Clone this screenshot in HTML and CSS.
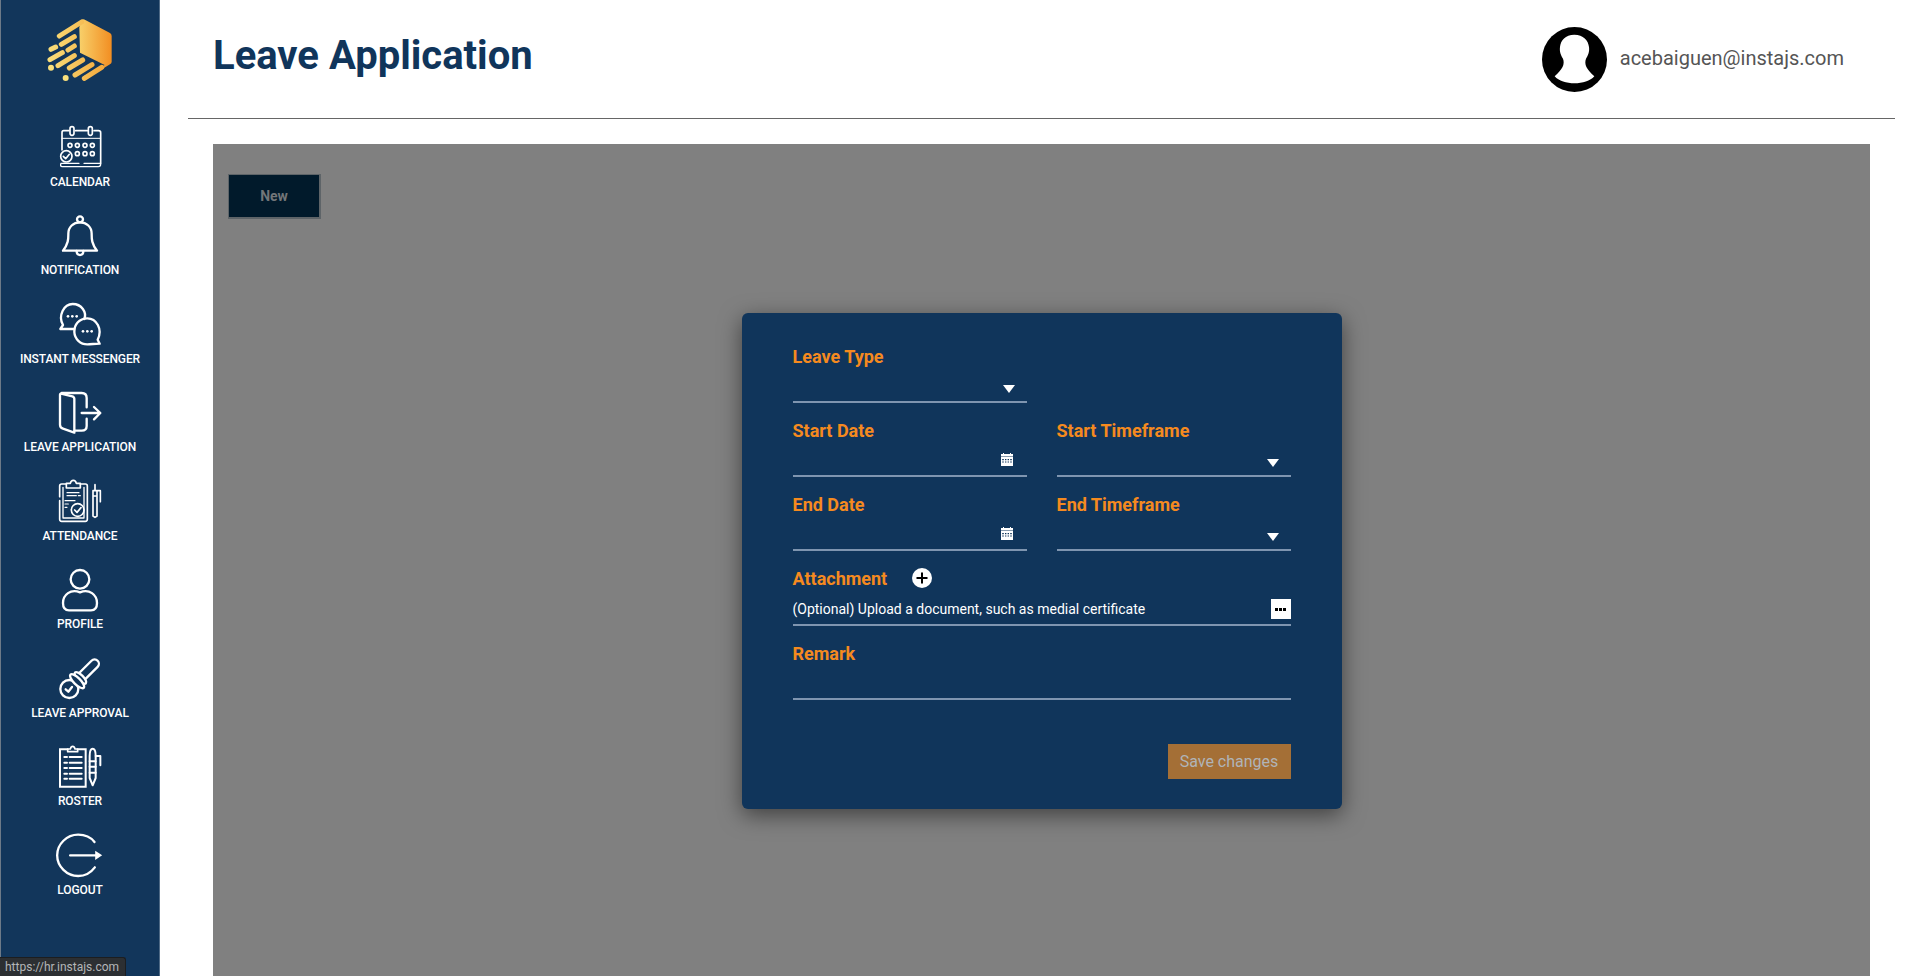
FILE: index.html
```html
<!DOCTYPE html>
<html lang="en">
<head>
    <meta charset="UTF-8">
    <meta name="viewport" content="width=device-width, initial-scale=1.0">
    <title>Leave Application</title>
    <link rel="stylesheet" href="styles.css">
</head>
<body>
    <!-- sidebar -->
    <aside class="sidebar">
        <svg class="logo" viewBox="0 0 300 240">
            <defs>
                <linearGradient id="logo-fill" x1="0" y1="0" x2="1" y2="0">
                    <stop offset="0" stop-color="#f8d06a"/>
                    <stop offset="1" stop-color="#f28e22"/>
                </linearGradient>
                <linearGradient id="logo-stripe" gradientUnits="userSpaceOnUse" x1="50" y1="0" x2="245" y2="0">
                    <stop offset="0" stop-color="#f9e07c"/>
                    <stop offset="1" stop-color="#f3a235"/>
                </linearGradient>
            </defs>
            <path d="M148 52 L155 30 Q160 26 166 30 L240 69 Q245 72 245 78 V155 Q245 160 240 163 L168 207 L158 200 L224 165 L150 128 Z" fill="url(#logo-fill)"/>
            <g fill="none" stroke="url(#logo-stripe)" stroke-width="15" stroke-linecap="round">
                <path d="M88 78 L155 36"/>
                <path d="M94 103 L133 80"/>
                <path d="M63 118 L77 111"/>
                <path d="M114 120 L133 108"/>
                <path d="M60 149 L97 128"/>
                <path d="M84 167 L133 137"/>
                <path d="M118 174 L158 150"/>
                <path d="M135 195 L186 164"/>
                <path d="M163 205 L215 172"/>
            </g>
            <circle cx="63" cy="173" r="9" fill="#f9e07c"/>
            <circle cx="107" cy="204" r="9" fill="#f9e07c"/>
        </svg>

        <nav class="nav">
            <a class="nav-item">
                <svg class="nav-icon" viewBox="0 0 126 126">
                    <path d="M30 14 H14 Q9 14 9 20 V72 M50 14 H85 M105 14 H118 Q125 14 125 20 V112" stroke-width="5"/>
                    <rect x="33" y="2" width="12" height="26" rx="6" stroke-width="5"/>
                    <rect x="88" y="2" width="12" height="26" rx="6" stroke-width="5"/>
                    <path d="M9 37 H125" stroke-width="3"/>
                    <circle cx="33" cy="58" r="6" stroke-width="5"/><circle cx="55" cy="58" r="6" stroke-width="5"/><circle cx="78" cy="58" r="6" stroke-width="5"/><circle cx="100" cy="58" r="6" stroke-width="5"/>
                    <circle cx="55" cy="83" r="6" stroke-width="5"/><circle cx="78" cy="83" r="6" stroke-width="5"/><circle cx="100" cy="83" r="6" stroke-width="5"/>
                    <circle cx="22" cy="91" r="17" stroke-width="5"/>
                    <path d="M13 91 L20 98 L31 85" stroke-width="5"/>
                    <path d="M6 112 Q2 122 10 122 H118 Q125 122 125 114 M6 112 H60 M75 112 H125" stroke-width="4"/>
                </svg>
                <span class="nav-label">CALENDAR</span>
            </a>
            <a class="nav-item">
                <svg class="nav-icon" viewBox="0 0 126 126">
                    <circle cx="63" cy="13" r="9"/>
                    <path d="M12 107 C29 85 28 70 28 56 C28 36 43 22 63 22 C83 22 98 36 98 56 C98 70 97 85 114 107 Z"/>
                    <path d="M53 108 C53 124 73 124 73 108"/>
                </svg>
                <span class="nav-label">NOTIFICATION</span>
            </a>
            <a class="nav-item">
                <svg class="nav-icon" viewBox="0 0 126 126">
                    <path d="M4 78 L12 66 C-4 38 15 3 41 3 C68 3 84 28 76 48 M46 78 H4"/>
                    <path d="M122 122 L116 110 C132 78 112 46 85 46 C60 46 45 66 46 87 C47 108 64 124 85 124 C95 124 110 122 122 122 Z"/>
                    <circle class="dot" cx="27" cy="40" r="4"/><circle class="dot" cx="40" cy="40" r="4"/><circle class="dot" cx="53" cy="40" r="4"/>
                    <circle class="dot" cx="72" cy="85" r="4"/><circle class="dot" cx="85" cy="85" r="4"/><circle class="dot" cx="98" cy="85" r="4"/>
                </svg>
                <span class="nav-label">INSTANT MESSENGER</span>
            </a>
            <a class="nav-item">
                <svg class="nav-icon" viewBox="0 0 126 126">
                    <path d="M6 5 L40 13 Q46 15 46 21 V122 L12 110 Q3 107 3 98 V9 Q3 4 6 5 Z"/>
                    <path d="M8 3 H68 Q83 3 83 18 V46 M83 80 V102 Q83 116 68 116 H47"/>
                    <path d="M68 63 H122 M105 45 L124 63 L105 82"/>
                </svg>
                <span class="nav-label">LEAVE APPLICATION</span>
            </a>
            <a class="nav-item">
                <svg class="nav-icon" viewBox="0 0 126 126">
                    <path d="M22 12 H8 Q2 12 2 18 V50 M2 62 V118 Q2 124 8 124 H79 Q85 124 85 118 V18 Q85 12 79 12 H64" stroke-width="5"/>
                    <path d="M12 22 V114 H75 V22" stroke-width="4"/>
                    <path d="M22 24 V10 H34 Q36 1 43 1 Q50 1 52 10 H64 V24 Z" stroke-width="5"/>
                    <path d="M24 38 H60 M24 47 H52 M58 47 H64 M18 62 H48 M18 72 H28 M18 82 H24" stroke-width="3.5"/>
                    <circle cx="56" cy="90" r="19" stroke-width="5"/>
                    <path d="M47 90 L54 97 L66 83" stroke-width="5"/>
                    <path d="M102 32 H114 V108 L108 112 L102 108 Z M102 48 H114 M108 32 V14 M114 32 H124 V65" stroke-width="5"/>
                </svg>
                <span class="nav-label">ATTENDANCE</span>
            </a>
            <a class="nav-item">
                <svg class="nav-icon" viewBox="0 0 126 126">
                    <circle cx="63" cy="31" r="28"/>
                    <path d="M30 124 C16 124 12 114 12 102 C12 78 35 58 63 70 C91 58 114 78 114 102 C114 114 110 124 96 124 Z"/>
                </svg>
                <span class="nav-label">PROFILE</span>
            </a>
            <a class="nav-item">
                <svg class="nav-icon" viewBox="0 0 126 126">
                    <g transform="translate(31 96) rotate(45)">
                        <rect x="-13" y="-120" width="26" height="74" rx="13"/>
                        <circle cx="0" cy="0" r="27"/>
                        <ellipse class="stamp-ring" cx="0" cy="-47" rx="23" ry="9"/>
                        <ellipse class="stamp-ring" cx="0" cy="-33" rx="28" ry="10"/>
                    </g>
                    <path d="M20 97 L28 104 L39 90"/>
                </svg>
                <span class="nav-label">LEAVE APPROVAL</span>
            </a>
            <a class="nav-item">
                <svg class="nav-icon" viewBox="0 0 126 126">
                    <path d="M26 10 H3 V122 H80 V10 H56" stroke-width="6" stroke-linejoin="miter"/>
                    <path d="M26 17 V9 H34 Q36 1 41 1 Q46 1 48 9 H56 V17 Z" stroke-width="5"/>
                    <path d="M16 33 H24 M32 33 H68 M16 50 H24 M32 50 H68 M16 66 H24 M32 66 H68 M16 83 H24 M32 83 H68 M16 98 H24 M32 98 H68" stroke-width="6"/>
                    <path d="M92 30 Q92 8 101 8 Q110 8 110 30 V96 L101 118 L92 96 Z" stroke-width="6"/>
                    <path d="M92 46 H110 M92 62 H110 M92 80 H110" stroke-width="6"/>
                    <path d="M110 30 H124 V58" stroke-width="6"/>
                </svg>
                <span class="nav-label">ROSTER</span>
            </a>
            <a class="nav-item">
                <svg class="nav-icon nav-icon-wide" viewBox="0 0 140 126">
                    <path d="M115 24 C101 6 84 2 66 2 C32 2 3 30 3 64 C3 98 32 126 66 126 C86 126 104 116 116 100"/>
                    <path d="M42 64 H122"/>
                    <path class="dot" d="M117 50 L138 64 L117 78 Z"/>
                </svg>
                <span class="nav-label">LOGOUT</span>
            </a>
        </nav>
    </aside>

    <main class="main">
        <header class="header">
            <h1 class="title">Leave Application</h1>
            <div class="user">
                <svg class="avatar" viewBox="0 0 195 195">
                    <circle cx="97.5" cy="97.5" r="97.5" fill="#000"/>
                    <path d="M97 23 C70 23 56 40 54 60 C52 75 57 85 63 95 C69 112 62 126 38 148 C62 176 133 176 157 148 C133 126 126 112 132 95 C138 85 143 75 141 60 C139 40 124 23 97 23 Z" fill="#fff"/>
                </svg>
                <span class="user-email">acebaiguen@instajs.com</span>
            </div>
        </header>

        <section class="panel">
            <button class="new-button">New</button>

            <!-- modal -->
            <div class="overlay">
                <form class="modal">
                    <div class="form-grid">
                        <div class="field">
                            <label class="field-label">Leave Type</label>
                            <div class="control"><span class="arrow"></span></div>
                        </div>
                        <div></div>
                        <div class="field">
                            <label class="field-label">Start Date</label>
                            <div class="control">
                                <svg class="date-icon" viewBox="0 0 14 14">
                                    <path d="M1 2 H3 V1 H4 V2 H10 V1 H11 V2 H13 V4.5 H1 Z" fill="#fff"/>
                                    <path fill-rule="evenodd" d="M1 5 H13 V14 H1 Z M2.2 7 H3.8 V8.2 H2.2 Z M5 7 H6.4 V8.2 H5 Z M7.6 7 H9 V8.2 H7.6 Z M10.2 7 H11.8 V8.2 H10.2 Z M2.2 9.4 H3.8 V10.6 H2.2 Z M5 9.4 H6.4 V10.6 H5 Z M7.6 9.4 H9 V10.6 H7.6 Z M10.2 9.4 H11.8 V10.6 H10.2 Z" fill="#fff"/>
                                </svg>
                            </div>
                        </div>
                        <div class="field">
                            <label class="field-label">Start Timeframe</label>
                            <div class="control"><span class="arrow"></span></div>
                        </div>
                        <div class="field">
                            <label class="field-label">End Date</label>
                            <div class="control">
                                <svg class="date-icon" viewBox="0 0 14 14">
                                    <path d="M1 2 H3 V1 H4 V2 H10 V1 H11 V2 H13 V4.5 H1 Z" fill="#fff"/>
                                    <path fill-rule="evenodd" d="M1 5 H13 V14 H1 Z M2.2 7 H3.8 V8.2 H2.2 Z M5 7 H6.4 V8.2 H5 Z M7.6 7 H9 V8.2 H7.6 Z M10.2 7 H11.8 V8.2 H10.2 Z M2.2 9.4 H3.8 V10.6 H2.2 Z M5 9.4 H6.4 V10.6 H5 Z M7.6 9.4 H9 V10.6 H7.6 Z M10.2 9.4 H11.8 V10.6 H10.2 Z" fill="#fff"/>
                                </svg>
                            </div>
                        </div>
                        <div class="field">
                            <label class="field-label">End Timeframe</label>
                            <div class="control"><span class="arrow"></span></div>
                        </div>
                        <div class="field field-wide">
                            <div class="attach-head">
                                <label class="field-label">Attachment</label>
                                <span class="plus-button">
                                    <svg viewBox="0 0 20 20"><path d="M10 4.5 V15.5 M4.5 10 H15.5"/></svg>
                                </span>
                            </div>
                            <div class="control control-file">
                                <span class="file-hint">(Optional) Upload a document, such as medial certificate</span>
                                <span class="file-button"><i></i><i></i><i></i></span>
                            </div>
                        </div>
                        <div class="field field-wide">
                            <label class="field-label">Remark</label>
                            <div class="control"></div>
                        </div>
                    </div>
                    <div class="modal-footer">
                        <button type="button" class="save-button">Save changes</button>
                    </div>
                </form>
            </div>
        </section>
    </main>

    <div class="status-bubble">https://hr.instajs.com</div>
</body>
</html>
```

FILE: styles.css
```css
html, body {
    height: 100%;
}

body {
    margin: 0;
    display: flex;
    height: 976px;
    overflow: hidden;
    font-family: Roboto, Arial, sans-serif;
    background-color: #ffffff;
}

/* sidebar */
.sidebar {
    width: 160px;
    flex-shrink: 0;
    box-sizing: border-box;
    display: flex;
    flex-direction: column;
    align-items: center;
    padding-top: 10px;
    background-color: #12365b;
    border-left: 1px solid #6d7a88;
    border-right: 1px solid #4f6a85;
}

.logo {
    width: 100px;
    height: 80px;
    flex-shrink: 0;
}

.nav {
    display: flex;
    flex-direction: column;
    align-items: center;
    gap: 26px;
    margin-top: 36px;
}

.nav-item {
    display: flex;
    flex-direction: column;
    align-items: center;
    gap: 6.5px;
    color: #ffffff;
}

.nav-icon {
    width: 42px;
    height: 42px;
    fill: none;
    stroke: #ffffff;
    stroke-width: 7;
    stroke-linecap: round;
    stroke-linejoin: round;
    overflow: visible;
}

.nav-icon .dot {
    fill: #ffffff;
    stroke: none;
}

.nav-icon .stamp-ring {
    fill: #12365b;
}

.nav-icon-wide {
    width: 47px;
}

.nav-label {
    font-size: 12px;
    line-height: 14px;
    font-weight: 500;
    letter-spacing: -0.1px;
    white-space: nowrap;
}

/* header */
.main {
    flex: 1;
    display: flex;
    flex-direction: column;
    min-width: 0;
    margin: 0 25px 0 28px;
}

.header {
    height: 118px;
    flex-shrink: 0;
    display: flex;
    justify-content: space-between;
    align-items: center;
    padding-left: 25px;
    padding-right: 51px;
    border-bottom: 1px solid #666666;
}

.title {
    margin: 0 0 6px;
    font-size: 40px;
    line-height: 48px;
    font-weight: 700;
    color: #10355b;
}

.user {
    display: flex;
    align-items: center;
    gap: 13px;
}

.avatar {
    width: 65px;
    height: 65px;
}

.user-email {
    margin-bottom: 2px;
    font-size: 20px;
    line-height: 24px;
    color: #555555;
}

/* panel */
.panel {
    position: relative;
    flex: 1;
    margin: 25px 25px 0;
    padding: 30px 15px;
    background-color: #808080;
}

.new-button {
    display: block;
    width: 93px;
    height: 45px;
    border-style: solid;
    border-color: #5e6468;
    border-width: 1px 2px 2px 1px;
    background-color: #011a2b;
    color: #727679;
    font-family: inherit;
    font-size: 14px;
    font-weight: 700;
}

.overlay {
    position: absolute;
    top: 0;
    right: 0;
    bottom: 0;
    left: 0;
    display: flex;
    justify-content: center;
    align-items: flex-start;
    padding-top: 169px;
}

/* modal */
.modal {
    width: 600px;
    box-sizing: border-box;
    padding: 33px 51px 30px 51px;
    border-radius: 6px;
    background-color: #10355b;
    box-shadow: 0 6px 22px rgba(0, 0, 0, 0.5);
}

.form-grid {
    display: grid;
    grid-template-columns: 234px 234px;
    column-gap: 30px;
    row-gap: 17px;
}

.field {
    display: flex;
    flex-direction: column;
}

.field-wide {
    grid-column: 1 / 3;
}

.field-label {
    font-size: 18px;
    line-height: 22px;
    font-weight: 700;
    color: #f58a1f;
}

.control {
    position: relative;
    height: 33px;
    display: flex;
    justify-content: flex-end;
    align-items: center;
    border-bottom: 2px solid #7f95b0;
}

.arrow {
    width: 0;
    height: 0;
    margin: 8px 12px 0 0;
    border-left: 6px solid transparent;
    border-right: 6px solid transparent;
    border-top: 8px solid #ffffff;
}

.date-icon {
    width: 14px;
    height: 14px;
    margin: 0 13px 0 0;
}

.attach-head {
    display: flex;
    align-items: center;
    gap: 25px;
}

.plus-button {
    width: 20px;
    height: 20px;
    margin-bottom: 2px;
    border-radius: 50%;
    background-color: #ffffff;
}

.plus-button svg {
    display: block;
    stroke: #000000;
    stroke-width: 2;
}

.control-file {
    box-sizing: border-box;
    height: 36px;
    padding-top: 4px;
    justify-content: space-between;
}

.file-hint {
    font-size: 14px;
    line-height: 18px;
    color: #ffffff;
}

.file-button {
    width: 20px;
    height: 20px;
    display: flex;
    justify-content: center;
    align-items: center;
    gap: 1px;
    background-color: #ffffff;
}

.file-button i {
    width: 3px;
    height: 3px;
    background-color: #000000;
}

.modal-footer {
    display: flex;
    justify-content: flex-end;
    margin-top: 44px;
}

.save-button {
    width: 123px;
    height: 35px;
    border: 0;
    background-color: #a46f36;
    color: #b0b4b8;
    font-family: inherit;
    font-size: 16px;
}

/* browser link preview */
.status-bubble {
    position: fixed;
    left: 0;
    bottom: 0;
    width: 126px;
    height: 19px;
    box-sizing: border-box;
    padding-left: 5px;
    font-size: 12px;
    line-height: 19px;
    white-space: nowrap;
    color: #b4b6b8;
    background-color: #2c2f32;
    border-top-right-radius: 3px;
    border-top: 1px solid #1c1e20;
    border-right: 1px solid #1c1e20;
}
```
